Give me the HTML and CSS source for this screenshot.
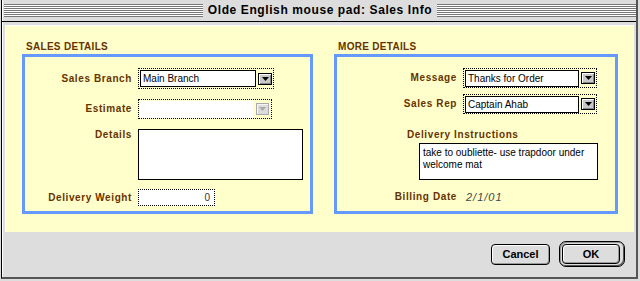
FILE: index.html
```html
<!DOCTYPE html>
<html>
<head>
    <title>Olde English mouse pad: Sales Info</title>
    <link rel="stylesheet" href="styles.css">
</head>
<body>
    <div class="window">
        <div class="titlebar">
            <div class="stripes"></div>
            <span class="title">Olde English mouse pad: Sales Info</span>
            <div class="stripes"></div>
        </div>

        <div class="panel">
            <section class="group group-sales">
                <h2>SALES DETAILS</h2>
                <div class="box">
                    <div class="row row-first">
                        <label class="label">Sales Branch</label>
                        <div class="popup">
                            <span class="popup-value">Main Branch</span>
                            <span class="popup-arrow"><svg width="7" height="4" viewBox="0 0 7 4"><polygon points="0,0 7,0 3.5,4" /></svg></span>
                        </div>
                    </div>
                    <div class="row row-estimate">
                        <label class="label">Estimate</label>
                        <div class="popup popup-disabled">
                            <span class="popup-value"></span>
                            <span class="popup-arrow"><svg width="7" height="4" viewBox="0 0 7 4"><polygon points="0,0 7,0 3.5,4" /></svg></span>
                        </div>
                    </div>
                    <div class="row row-top row-details">
                        <label class="label">Details</label>
                        <div class="textbox textbox-details"></div>
                    </div>
                    <div class="row row-weight">
                        <label class="label">Delivery Weight</label>
                        <div class="field field-weight">0</div>
                    </div>
                </div>
            </section>

            <section class="group group-more">
                <h2>MORE DETAILS</h2>
                <div class="box">
                    <div class="row row-first">
                        <label class="label">Message</label>
                        <div class="popup">
                            <span class="popup-value">Thanks for Order</span>
                            <span class="popup-arrow"><svg width="7" height="4" viewBox="0 0 7 4"><polygon points="0,0 7,0 3.5,4" /></svg></span>
                        </div>
                    </div>
                    <div class="row row-rep">
                        <label class="label">Sales Rep</label>
                        <div class="popup">
                            <span class="popup-value">Captain Ahab</span>
                            <span class="popup-arrow"><svg width="7" height="4" viewBox="0 0 7 4"><polygon points="0,0 7,0 3.5,4" /></svg></span>
                        </div>
                    </div>
                    <div class="instructions">
                        <label class="label">Delivery Instructions</label>
                        <div class="textbox textbox-instructions">take to oubliette- use trapdoor under welcome mat</div>
                    </div>
                    <div class="row row-billing">
                        <label class="label">Billing Date</label>
                        <span class="static-value">2/1/01</span>
                    </div>
                </div>
            </section>
        </div>

        <div class="buttons">
            <button class="btn">Cancel</button>
            <div class="default-ring">
                <button class="btn btn-ok">OK</button>
            </div>
        </div>
    </div>
</body>
</html>
```

FILE: styles.css
```css
* {
    box-sizing: border-box;
}

body {
    margin: 0;
    background-color: #dddddd;
    font-family: "Liberation Sans", Arial, sans-serif;
}

.window {
    width: 637px;
    height: 279px;
    margin-left: 1px;
    background-color: #dddddd;
    border-left: 1px solid #000;
    border-right: 2px solid #555;
    border-bottom: 2px solid #555;
    box-shadow: inset 1px 0 0 #fff;
}

/* title bar */
.titlebar {
    display: flex;
    height: 22px;
    padding-left: 2px;
    border-bottom: 1px solid #000;
}

.stripes {
    flex: 1;
    height: 13px;
    margin-top: 4px;
    background: repeating-linear-gradient(to bottom, #777 0, #777 1px, #fff 1px, #fff 2px);
}

.title {
    padding: 0 5px;
    font-size: 12px;
    font-weight: bold;
    letter-spacing: 0.6px;
    line-height: 21px;
    color: #000;
}

/* yellow panel */
.panel {
    display: flex;
    gap: 21px;
    height: 207px;
    margin: 3px 2px 0 3px;
    padding: 15px 16px 0 16px;
    background-color: #ffffcc;
    border-top: 1px solid #fff;
    border-left: 1px solid #fff;
}

.group-sales {
    width: 291px;
}

.group-more {
    width: 284px;
}

.group h2 {
    margin: 0 0 1px 0;
    padding-left: 4px;
    font-size: 10px;
    line-height: 12px;
    letter-spacing: 0.3px;
    color: #663300;
}

.box {
    height: 160px;
    padding-top: 11px;
    border: 3px solid #6699ff;
}

.row {
    display: flex;
    align-items: center;
}

.row-top {
    align-items: flex-start;
}

.label {
    flex: none;
    margin-right: 6px;
    font-size: 10px;
    font-weight: bold;
    letter-spacing: 0.6px;
    line-height: 12px;
    text-align: right;
    color: #663300;
}

.group-sales .row .label {
    width: 107px;
}

.group-more .row .label {
    width: 120px;
}

.row-estimate {
    margin-top: 10px;
}

.row-details {
    margin-top: 10px;
}

.row-weight {
    margin-top: 9px;
}

.row-rep {
    margin-top: 6px;
}

/* popup menus */
.popup {
    display: flex;
    align-items: center;
    width: 136px;
    height: 21px;
    padding: 0 1px;
    border: 1px dotted #000;
}

.group-more .popup {
    width: 134px;
    height: 20px;
}

.popup-disabled {
    width: 134px;
    height: 20px;
}

.popup-value {
    flex: 1;
    height: 17px;
    padding-left: 2px;
    background-color: #fff;
    border: 1px solid #000;
    font-size: 10px;
    line-height: 15px;
    color: #000;
}

.popup-arrow {
    display: flex;
    align-items: center;
    justify-content: center;
    width: 14px;
    height: 12px;
    margin-left: 2px;
    background-color: #c8c8c8;
    border: 1px solid #000;
    box-shadow: inset 1px 1px 0 #fff, inset -1px -1px 0 #888;
}

.popup-arrow svg {
    fill: #000;
}

.popup-disabled .popup-value {
    border-color: #fff;
}

.popup-disabled .popup-arrow {
    width: 13px;
    margin-left: 3px;
    margin-right: 1px;
    background-color: #dcdcdc;
    border-color: #aaa;
    box-shadow: inset 1px 1px 0 #f4f4f4;
}

.popup-disabled .popup-arrow svg {
    fill: #aaa;
}

/* text boxes */
.textbox {
    background-color: #fff;
    border: 1px solid #000;
    font-size: 10px;
    line-height: 12px;
    color: #000;
}

.textbox-details {
    width: 165px;
    height: 51px;
}

.field {
    background-color: #fff;
    border: 1px dotted #000;
    font-size: 10px;
    line-height: 15px;
    color: #333;
}

.field-weight {
    width: 77px;
    height: 17px;
    padding-right: 4px;
    text-align: right;
}

.instructions {
    margin-top: 15px;
}

.instructions .label {
    display: block;
    padding-left: 70px;
    text-align: left;
}

.textbox-instructions {
    width: 179px;
    height: 37px;
    margin: 2px 0 0 82px;
    padding: 3px 0 0 3px;
}

.row-billing {
    margin-top: 11px;
}

.static-value {
    padding-left: 3px;
    font-size: 11px;
    font-style: italic;
    letter-spacing: 1px;
    line-height: 12px;
    color: #444;
}

/* dialog buttons */
.buttons {
    display: flex;
    justify-content: flex-end;
    align-items: center;
    gap: 9px;
    padding: 9px 11px 0 0;
}

.btn {
    width: 59px;
    height: 21px;
    padding: 0;
    background-color: #dddddd;
    border: 1px solid #000;
    border-radius: 4px;
    box-shadow: inset 1px 1px 0 #fff, inset -1px -1px 0 #999;
    font-family: "Liberation Sans", Arial, sans-serif;
    font-size: 11px;
    font-weight: bold;
    color: #000;
}

.default-ring {
    display: flex;
    width: 66px;
    height: 26px;
    padding: 2px;
    background-color: #dddddd;
    border: 1px solid #000;
    border-radius: 7px;
    box-shadow: inset 1px 1px 0 #999, inset -1px -1px 0 #555;
}

.btn-ok {
    width: 58px;
    height: 20px;
}
```
